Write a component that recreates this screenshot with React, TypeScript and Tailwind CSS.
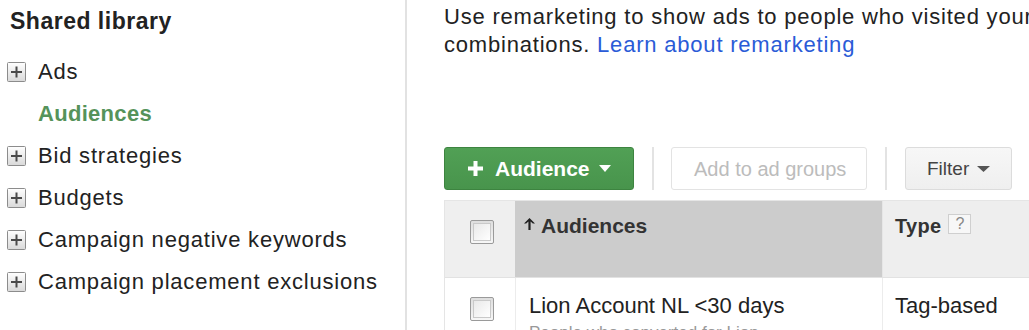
import React from "react";

const PlusBox = () => (
  <svg width="19" height="20" viewBox="0 0 19 20" className="shrink-0">
    <defs>
      <linearGradient id="pb" x1="0" y1="0" x2="0" y2="1">
        <stop offset="0" stopColor="#ffffff" />
        <stop offset="1" stopColor="#d9d9d9" />
      </linearGradient>
    </defs>
    <rect x="0.5" y="0.5" width="18" height="19" rx="1" fill="url(#pb)" stroke="#8c8c8c" />
    <rect x="4" y="9" width="11" height="2" fill="#4a4a4a" />
    <rect x="8.5" y="4.5" width="2" height="11" fill="#4a4a4a" />
  </svg>
);

const Checkbox = () => (
  <div className="w-[24px] h-[24px] rounded-[2px] border border-[#9a9a9a] bg-gradient-to-b from-[#dedede] to-[#f7f7f7] p-[2px]">
    <div className="w-full h-full border border-[#c9c9c9] bg-gradient-to-br from-[#e9e9e9] to-[#ffffff]" />
  </div>
);

const SideItem = ({ label, box = true, active = false }: { label: string; box?: boolean; active?: boolean }) => (
  <div className="h-[42px] flex items-center">
    {box ? <PlusBox /> : <div className="w-[19px] shrink-0" />}
    <span
      className={
        "ml-[12px] whitespace-nowrap text-[22px] leading-[26px] " +
        (active ? "font-bold text-[#55935a] tracking-[0.3px]" : "text-[#222] tracking-[0.8px]")
      }
    >
      {label}
    </span>
  </div>
);

export default function App() {
  return (
    <div
      className="w-[1029px] h-[330px] overflow-hidden bg-white flex text-[#222]"
      style={{ fontFamily: "'Liberation Sans', Arial, sans-serif" }}
    >
      {/* Sidebar */}
      <div className="w-[407px] shrink-0 border-r-2 border-[#e2e2e2] pl-[7px] pt-[7px]">
        <div className="pl-[3px] text-[23px] leading-[28px] font-bold tracking-[0.5px] text-[#222]">Shared library</div>
        <div className="mt-[16px]">
          <SideItem label="Ads" />
          <SideItem label="Audiences" box={false} active />
          <SideItem label="Bid strategies" />
          <SideItem label="Budgets" />
          <SideItem label="Campaign negative keywords" />
          <SideItem label="Campaign placement exclusions" />
        </div>
      </div>

      {/* Main */}
      <div className="flex-1 min-w-0 pl-[37px] pt-[3px] overflow-hidden">
        <div className="text-[22px] leading-[28px] tracking-[0.8px] whitespace-nowrap">
          <div>Use remarketing to show ads to people who visited your website</div>
          <div>
            combinations. <a className="text-[#2a5bd7]">Learn about remarketing</a>
          </div>
        </div>

        {/* Toolbar */}
        <div className="mt-[88px] h-[43px] flex items-stretch">
          <div className="w-[190px] shrink-0 rounded-[3px] border border-[#3d8440] bg-gradient-to-b from-[#51a055] to-[#48944c] flex items-center pl-[23px]">
            <svg width="15" height="15" viewBox="0 0 15 15">
              <rect x="0" y="5.5" width="15" height="4" fill="#fff" />
              <rect x="5.5" y="0" width="4" height="15" fill="#fff" />
            </svg>
            <span className="ml-[12px] text-white font-bold text-[21px] leading-[24px]">Audience</span>
            <svg className="ml-[9px]" width="12" height="7" viewBox="0 0 12 7">
              <polygon points="0,0 12,0 6,7" fill="#fff" />
            </svg>
          </div>
          <div className="ml-[18px] w-[2px] bg-[#e3e3e3]" />
          <div className="ml-[17px] w-[196px] shrink-0 rounded-[3px] border border-[#e3e3e3] bg-white flex items-center pl-[22px]">
            <span className="text-[20px] leading-[24px] text-[#bcbcbc] whitespace-nowrap">Add to ad groups</span>
          </div>
          <div className="ml-[18px] w-[2px] bg-[#e3e3e3]" />
          <div className="ml-[18px] w-[107px] shrink-0 rounded-[3px] border border-[#dcdcdc] bg-gradient-to-b from-[#f7f7f7] to-[#efefef] flex items-center pl-[21px]">
            <span className="text-[19px] leading-[24px] text-[#444]">Filter</span>
            <svg className="ml-[8px]" width="13" height="6" viewBox="0 0 13 6">
              <polygon points="0,0 13,0 6.5,6" fill="#555" />
            </svg>
          </div>
        </div>

        {/* Table */}
        <div className="mt-[10px] border-t border-l border-[#e5e5e5]">
          <div className="h-[77px] flex border-b border-[#e2e2e2]">
            <div className="w-[70px] shrink-0 bg-[#efefef] pl-[25px] pt-[19px]">
              <Checkbox />
            </div>
            <div className="w-[367px] shrink-0 bg-[#cccccc] pl-[9px] pt-[13px] flex items-start">
              <svg className="mt-[4px]" width="11" height="12" viewBox="0 0 11 12">
                <path d="M5.5 0 L11 5.5 L8.8 5.5 L6.6 3.6 L6.6 12 L4.4 12 L4.4 3.6 L2.2 5.5 L0 5.5 Z" fill="#222" />
              </svg>
              <span className="ml-[6px] font-bold text-[21px] leading-[24px] text-[#333]">Audiences</span>
            </div>
            <div className="flex-1 bg-[#eeeeee] border-l border-[#e6e6e6] pl-[12px] pt-[13px] flex items-start">
              <span className="font-bold text-[20px] leading-[24px] tracking-[0.3px] text-[#333]">Type</span>
              <span className="ml-[7px] mt-[0px] w-[23px] h-[20px] border border-[#cfcfcf] bg-[#f7f7f7] text-[#888] text-[16px] leading-[18px] text-center">?</span>
            </div>
          </div>
          <div className="h-[60px] flex">
            <div className="w-[70px] shrink-0 pl-[25px] pt-[19px]">
              <Checkbox />
            </div>
            <div className="w-[367px] shrink-0 border-l border-[#ececec] pl-[13px] pt-[15px]">
              <div className="text-[22px] leading-[26px] text-[#222] whitespace-nowrap">Lion Account NL &lt;30 days</div>
              <div className="mt-[3px] text-[17px] leading-[22px] text-[#999] whitespace-nowrap">People who converted for Lion</div>
            </div>
            <div className="flex-1 border-l border-[#ececec] pl-[12px] pt-[15px]">
              <div className="text-[22px] leading-[26px] text-[#222] whitespace-nowrap">Tag-based</div>
            </div>
          </div>
        </div>
      </div>
    </div>
  );
}
